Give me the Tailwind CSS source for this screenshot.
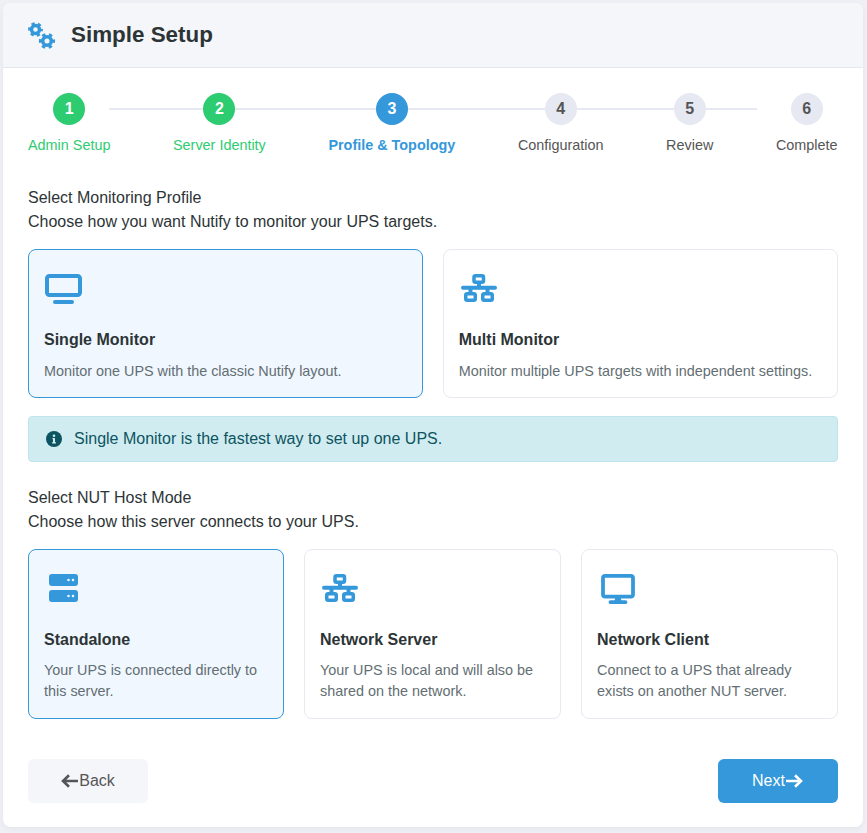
<!DOCTYPE html>
<html lang="en">
<head>
  <meta charset="UTF-8" />
  <meta name="viewport" content="width=device-width, initial-scale=1.0"/>
  <title>Simple Setup</title>
  <script src="https://cdn.jsdelivr.net/npm/@tailwindcss/browser@4"></script>
</head>
<body class="h-[833px] overflow-hidden bg-[#eef0f6] pt-[3px] pl-[3px] font-['Liberation_Sans',Arial,sans-serif] text-[#2d3436]">

  <div class="w-[859.5px] h-[824px] bg-white rounded-lg overflow-hidden shadow-[0_2px_6px_rgba(0,0,0,0.05)]">

    <!-- header -->
    <div class="h-[65px] flex items-center gap-[15px] pl-[25px] bg-[#f5f6fa] border-b border-[#e4e7f0]">
      <svg class="w-7 h-[27px]" viewBox="0 0 28 27" fill="none" stroke="#3498db">
        <circle cx="7.5" cy="7.5" r="4" stroke-width="3.4"/>
        <circle cx="7.5" cy="7.5" r="6" stroke-width="2.8" stroke-dasharray="3.1 3.18" stroke-dashoffset="1.5"/>
        <circle cx="19" cy="19" r="4.3" stroke-width="3.6"/>
        <circle cx="19" cy="19" r="6.6" stroke-width="3" stroke-dasharray="3.4 3.5" stroke-dashoffset="1.7"/>
      </svg>
      <h1 class="text-[22.4px] font-bold">Simple Setup</h1>
    </div>

    <div class="px-[25px] pt-[25px]">

      <!-- stepper -->
      <div class="relative flex justify-between">
        <div class="absolute top-[15px] left-[10%] right-[10%] h-[2px] bg-[#e6e9f2]"></div>
        <div class="relative flex flex-col items-center">
          <div class="w-8 h-8 rounded-full bg-[#2ecc71] text-white font-bold flex items-center justify-center">1</div>
          <span class="mt-3 text-[14.4px] leading-[16px] text-[#2ecc71]">Admin Setup</span>
        </div>
        <div class="relative flex flex-col items-center">
          <div class="w-8 h-8 rounded-full bg-[#2ecc71] text-white font-bold flex items-center justify-center">2</div>
          <span class="mt-3 text-[14.4px] leading-[16px] text-[#2ecc71]">Server Identity</span>
        </div>
        <div class="relative flex flex-col items-center">
          <div class="w-8 h-8 rounded-full bg-[#3498db] text-white font-bold flex items-center justify-center">3</div>
          <span class="mt-3 text-[14.4px] leading-[16px] font-bold text-[#3498db]">Profile &amp; Topology</span>
        </div>
        <div class="relative flex flex-col items-center">
          <div class="w-8 h-8 rounded-full bg-[#e6e9f2] text-[#555] font-bold flex items-center justify-center">4</div>
          <span class="mt-3 text-[14.4px] leading-[16px] text-[#555]">Configuration</span>
        </div>
        <div class="relative flex flex-col items-center">
          <div class="w-8 h-8 rounded-full bg-[#e6e9f2] text-[#555] font-bold flex items-center justify-center">5</div>
          <span class="mt-3 text-[14.4px] leading-[16px] text-[#555]">Review</span>
        </div>
        <div class="relative flex flex-col items-center">
          <div class="w-8 h-8 rounded-full bg-[#e6e9f2] text-[#555] font-bold flex items-center justify-center">6</div>
          <span class="mt-3 text-[14.4px] leading-[16px] text-[#555]">Complete</span>
        </div>
      </div>

      <!-- monitoring profile -->
      <p class="mt-[33px] leading-[24px]">Select Monitoring Profile</p>
      <p class="leading-[24px]">Choose how you want Nutify to monitor your UPS targets.</p>

      <div class="mt-[15px] grid grid-cols-2 gap-5">
        <div class="h-[149px] rounded-lg border border-[#3498db] bg-[#f0f7ff] pl-[15px] pt-[24px]">
          <svg class="ml-[1px] w-[37px] h-[30px]" viewBox="0 0 37 30" fill="none">
            <rect x="2" y="2" width="33" height="19" rx="2.5" stroke="#3498db" stroke-width="4"/>
            <rect x="8" y="26" width="21" height="4" rx="2" fill="#3498db"/>
          </svg>
          <h3 class="mt-[24px] font-bold leading-[24px]">Single Monitor</h3>
          <p class="mt-[8px] text-[14.4px] leading-[22px] text-[#636e72]">Monitor one UPS with the classic Nutify layout.</p>
        </div>
        <div class="h-[149px] rounded-lg border border-[#e6e9f2] bg-white pl-[15px] pt-[24px]">
          <svg class="ml-[2px] w-[37px] h-[30px]" viewBox="0 0 37 30" fill="none" stroke="#3498db">
            <rect x="13" y="1.750" width="9.500" height="6.500" rx="1.500" stroke-width="3.500"/>
            <rect x="4.750" y="19.750" width="9.500" height="6.500" rx="1.500" stroke-width="3.500"/>
            <rect x="21.750" y="19.750" width="9.500" height="6.500" rx="1.500" stroke-width="3.500"/>
            <path d="M18 9v5M2 13.700h32M9.500 14v5M26.500 14v5" stroke-width="4" stroke-linecap="round"/>
          </svg>
          <h3 class="mt-[24px] font-bold leading-[24px]">Multi Monitor</h3>
          <p class="mt-[8px] text-[14.4px] leading-[22px] text-[#636e72]">Monitor multiple UPS targets with independent settings.</p>
        </div>
      </div>

      <div class="mt-[18px] h-[46px] flex items-center gap-[12px] pl-[17px] rounded border border-[#bee5eb] bg-[#d1ecf1] text-[#0c5460]">
        <svg class="w-4 h-4" viewBox="0 0 16 16">
          <circle cx="8" cy="8" r="8" fill="#0c5460"/>
          <circle cx="8" cy="4.800" r="1.300" fill="#d1ecf1"/>
          <path d="M6.500 7h2.500v4.200h1v1.200h-4v-1.200h1v-3h-.500z" fill="#d1ecf1"/>
        </svg>
        <span>Single Monitor is the fastest way to set up one UPS.</span>
      </div>

      <!-- host mode -->
      <p class="mt-[24px] leading-[24px]">Select NUT Host Mode</p>
      <p class="leading-[24px]">Choose how this server connects to your UPS.</p>

      <div class="mt-[15px] grid grid-cols-[256px_257px_257px] gap-5">
        <div class="h-[170px] rounded-lg border border-[#3498db] bg-[#f0f7ff] pl-[15px] pr-3 pt-[24px]">
          <svg class="ml-[5px] w-[29px] h-[30px]" viewBox="0 0 29 30" fill="#3498db">
            <path fill-rule="evenodd" d="M3 0h23a3 3 0 0 1 3 3v6a3 3 0 0 1-3 3H3a3 3 0 0 1-3-3V3a3 3 0 0 1 3-3zM19.500 4.700a1.300 1.300 0 1 0 0 2.600 1.300 1.300 0 0 0 0-2.600zM24 4.700a1.300 1.300 0 1 0 0 2.600 1.300 1.300 0 0 0 0-2.600z"/>
            <path fill-rule="evenodd" d="M3 16h23a3 3 0 0 1 3 3v6a3 3 0 0 1-3 3H3a3 3 0 0 1-3-3v-6a3 3 0 0 1 3-3zM19.500 20.700a1.300 1.300 0 1 0 0 2.600 1.300 1.300 0 0 0 0-2.600zM24 20.700a1.300 1.300 0 1 0 0 2.600 1.300 1.300 0 0 0 0-2.600z"/>
          </svg>
          <h3 class="mt-[24px] font-bold leading-[24px]">Standalone</h3>
          <p class="mt-[8px] text-[14.4px] leading-[21px] text-[#636e72]">Your UPS is connected directly to this server.</p>
        </div>
        <div class="h-[170px] rounded-lg border border-[#e6e9f2] bg-white pl-[15px] pr-3 pt-[24px]">
          <svg class="ml-[2px] w-[37px] h-[30px]" viewBox="0 0 37 30" fill="none" stroke="#3498db">
            <rect x="13" y="1.750" width="9.500" height="6.500" rx="1.500" stroke-width="3.500"/>
            <rect x="4.750" y="19.750" width="9.500" height="6.500" rx="1.500" stroke-width="3.500"/>
            <rect x="21.750" y="19.750" width="9.500" height="6.500" rx="1.500" stroke-width="3.500"/>
            <path d="M18 9v5M2 13.700h32M9.500 14v5M26.500 14v5" stroke-width="4" stroke-linecap="round"/>
          </svg>
          <h3 class="mt-[24px] font-bold leading-[24px]">Network Server</h3>
          <p class="mt-[8px] text-[14.4px] leading-[21px] text-[#636e72]">Your UPS is local and will also be shared on the network.</p>
        </div>
        <div class="h-[170px] rounded-lg border border-[#e6e9f2] bg-white pl-[15px] pr-3 pt-[24px]">
          <svg class="ml-[4px] w-[34px] h-[30px]" viewBox="0 0 576 512" fill="#3498db">
            <path d="M64 0C28.700 0 0 28.700 0 64V352c0 35.300 28.700 64 64 64H240l-10.700 32H160c-17.700 0-32 14.300-32 32s14.300 32 32 32H416c17.700 0 32-14.300 32-32s-14.300-32-32-32H346.700L336 416H512c35.300 0 64-28.700 64-64V64c0-35.300-28.700-64-64-64H64zM512 64V352H64V64H512z"/>
          </svg>
          <h3 class="mt-[24px] font-bold leading-[24px]">Network Client</h3>
          <p class="mt-[8px] text-[14.4px] leading-[21px] text-[#636e72]">Connect to a UPS that already exists on another NUT server.</p>
        </div>
      </div>

      <!-- nav buttons -->
      <div class="mt-[40px] flex justify-between">
        <button class="w-[120px] h-[44px] rounded-md bg-[#f5f6fa] text-[#555] flex items-center justify-center">
          <svg class="w-[18px] h-[14px]" viewBox="0 0 18 14" fill="none" stroke="#555" stroke-width="2.600">
            <path d="M17 7H2M8 1.200 2 7l6 5.800"/>
          </svg>
          <span>Back</span>
        </button>
        <button class="w-[120px] h-[44px] rounded-md bg-[#3498db] text-white flex items-center justify-center">
          <span>Next</span>
          <svg class="w-[18px] h-[14px]" viewBox="0 0 18 14" fill="none" stroke="#fff" stroke-width="2.600">
            <path d="M1 7h15M10 1.200 16 7l-6 5.800"/>
          </svg>
        </button>
      </div>
    </div>
  </div>

</body>
</html>
